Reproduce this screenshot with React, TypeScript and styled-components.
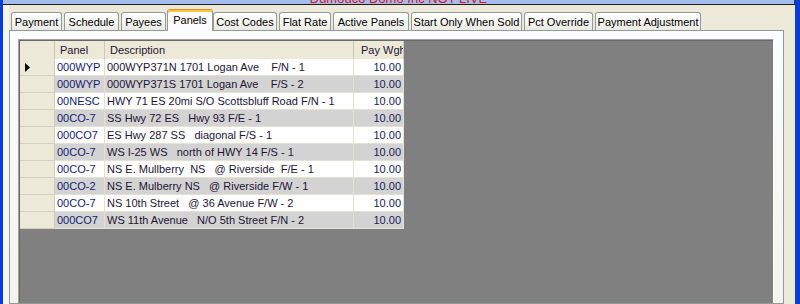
import React from "react";
import styled, { createGlobalStyle } from "styled-components";

const Global = createGlobalStyle`
  html, body { margin: 0; padding: 0; overflow: hidden; background: #0A3CD8; }
  body { font-family: "Liberation Sans", Arial, sans-serif; font-size: 11px; }
`;

const Window = styled.div`
  width: 800px;
  height: 304px;
  box-sizing: border-box;
  padding: 0 5px 0 3px;
  background: #0A3CD8;
  display: flex;
  flex-direction: column;
  overflow: hidden;
`;

const TitleBar = styled.div`
  flex: none;
  height: 4px;
  background: #A3BDEC;
  border-bottom: 1px solid #1c1c1c;
  border-right: 1px solid #2c3a60;
  display: flex;
  justify-content: center;
  overflow: hidden;
`;

const Warning = styled.span`
  color: #E3121C;
  font-size: 13px;
  line-height: 13px;
  margin-top: -8px;
  white-space: nowrap;
`;

const Body = styled.div`
  flex: 1;
  display: flex;
  min-height: 0;
`;

const SideStrip = styled.div`
  flex: none;
  width: 6px;
  background: #F7F6F1;
`;

const TabArea = styled.div`
  flex: 1;
  min-width: 0;
  background: #ECE9D8;
  display: flex;
  flex-direction: column;
  padding-right: 11px;
`;

const TabStrip = styled.div`
  flex: none;
  height: 25px;
  display: flex;
  align-items: flex-end;
  gap: 2px;
  padding-left: 2px;
  position: relative;
  z-index: 1;
`;

const Tab = styled.div<{ $w: number; $active?: boolean }>`
  width: ${(p) => p.$w}px;
  height: ${(p) => (p.$active ? 22 : 18)}px;
  box-sizing: border-box;
  flex: none;
  display: flex;
  align-items: center;
  justify-content: center;
  white-space: nowrap;
  color: #000;
  border: 1px solid #919B9C;
  border-bottom: none;
  border-radius: 3px 3px 0 0;
  background: ${(p) =>
    p.$active ? "#FCFCFE" : "linear-gradient(#FFFFFF 0%, #F7F7F4 50%, #E9E8E2 100%)"};
  ${(p) =>
    p.$active
      ? `border-top: 1px solid #E68B2C;
         box-shadow: inset 0 2px 0 #FFC83C;
         margin: 0 -2px -1px -1px;
         padding-bottom: 1px;`
      : ""}
`;

const Panel = styled.div`
  flex: 1;
  min-height: 0;
  border: 1px solid #919B9C;
  background: linear-gradient(#FCFCFE, #F4F3EE);
  padding: 8px 9px 0 8px;
  display: flex;
`;

const Grid = styled.div`
  flex: 1;
  background: #808080;
  border-top: 1px solid #A0A0A0;
  border-left: 1px solid #A0A0A0;
  border-right: 1px solid #FFFFFF;
  box-shadow: inset 1px 1px 0 #696969;
  padding: 1px 0 0 1px;
  display: flex;
  flex-direction: column;
  align-items: flex-start;
`;

const columns = "35px 50px 249px 50px";

const HeaderRow = styled.div`
  display: grid;
  grid-template-columns: ${columns};
  height: 18px;
  background: #ECE9D8;
`;

const HeaderCell = styled.div<{ $pad?: number }>`
  box-sizing: border-box;
  border-right: 1px solid #CBC7B8;
  padding-left: ${(p) => p.$pad ?? 5}px;
  display: flex;
  align-items: center;
  white-space: nowrap;
  overflow: hidden;
  color: #1C1434;
`;

const Row = styled.div<{ $alt: boolean }>`
  display: grid;
  grid-template-columns: ${columns};
  height: 17px;
  background: ${(p) => (p.$alt ? "#D3D3D3" : "#FFFFFF")};
`;

const RowHeader = styled.div`
  box-sizing: border-box;
  background: #ECE9D8;
  border-right: 1px solid #D0CCBC;
  border-bottom: 1px solid #D4D0C0;
  padding-left: 5px;
  display: flex;
  align-items: center;
`;

const Cell = styled.div<{ $right?: boolean; $tone?: string }>`
  box-sizing: border-box;
  border-right: 1px solid #E4E1D3;
  border-bottom: 1px solid #E4E1D3;
  padding: 0 2px;
  display: flex;
  align-items: center;
  justify-content: ${(p) => (p.$right ? "flex-end" : "flex-start")};
  white-space: pre;
  overflow: hidden;
  color: ${(p) => p.$tone ?? "#1C1434"};
`;

const tabs: { label: string; w: number; active?: boolean }[] = [
  { label: "Payment", w: 51 },
  { label: "Schedule", w: 55 },
  { label: "Payees", w: 45 },
  { label: "Panels", w: 46, active: true },
  { label: "Cost Codes", w: 64 },
  { label: "Flat Rate", w: 52 },
  { label: "Active Panels", w: 76 },
  { label: "Start Only When Sold", w: 111 },
  { label: "Pct Override", w: 69 },
  { label: "Payment Adjustment", w: 106 },
];

const rows: [string, string][] = [
  ["000WYP", "000WYP371N 1701 Logan Ave    F/N - 1"],
  ["000WYP", "000WYP371S 1701 Logan Ave    F/S - 2"],
  ["00NESC", "HWY 71 ES 20mi S/O Scottsbluff Road F/N - 1"],
  ["00CO-7", "SS Hwy 72 ES   Hwy 93 F/E - 1"],
  ["000CO7", "ES Hwy 287 SS   diagonal F/S - 1"],
  ["00CO-7", "WS I-25 WS   north of HWY 14 F/S - 1"],
  ["00CO-7", "NS E. Mullberry  NS   @ Riverside  F/E - 1"],
  ["00CO-2", "NS E. Mulberry NS   @ Riverside F/W - 1"],
  ["00CO-7", "NS 10th Street   @ 36 Avenue F/W - 2"],
  ["000CO7", "WS 11th Avenue   N/O 5th Street F/N - 2"],
];

const Pointer = () => (
  <svg width="5" height="9" viewBox="0 0 5 9">
    <path d="M0 0 L5 4.5 L0 9 Z" fill="#000" />
  </svg>
);

export default function App() {
  return (
    <>
      <Global />
      <Window>
        <TitleBar>
          <Warning>Dumouco Domo Inc NOT LIVE</Warning>
        </TitleBar>
        <Body>
          <SideStrip />
          <TabArea>
            <TabStrip>
              {tabs.map((t) => (
                <Tab key={t.label} $w={t.w} $active={t.active}>
                  {t.label}
                </Tab>
              ))}
            </TabStrip>
            <Panel>
              <Grid>
                <HeaderRow>
                  <HeaderCell />
                  <HeaderCell>Panel</HeaderCell>
                  <HeaderCell>Description</HeaderCell>
                  <HeaderCell $pad={7}>Pay Wght</HeaderCell>
                </HeaderRow>
                {rows.map(([code, desc], i) => (
                  <Row key={i} $alt={i % 2 === 1}>
                    <RowHeader>{i === 0 ? <Pointer /> : null}</RowHeader>
                    <Cell $tone="#15226E">{code}</Cell>
                    <Cell>{desc}</Cell>
                    <Cell $right $tone="#151C5A">10.00</Cell>
                  </Row>
                ))}
              </Grid>
            </Panel>
          </TabArea>
        </Body>
      </Window>
    </>
  );
}
